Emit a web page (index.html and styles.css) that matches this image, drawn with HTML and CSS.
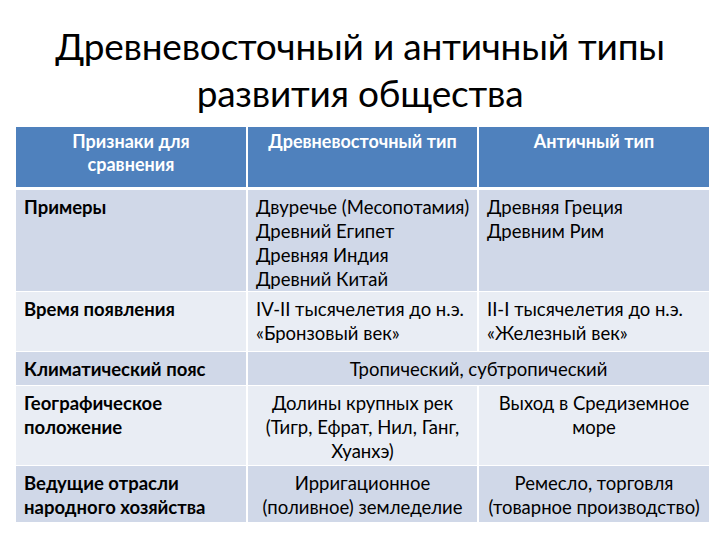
FILE: index.html
```html
<!DOCTYPE html>
<html lang="ru">
<head>
<meta charset="utf-8">
<title>Древневосточный и античный типы развития общества</title>
<link rel="stylesheet" href="styles.css">
</head>
<body>
<div class="slide">
  <h1 class="title">Древневосточный и античный типы<br>развития общества</h1>
  <table class="cmp">
    <colgroup>
      <col class="c1"><col class="c2"><col class="c3">
    </colgroup>
    <thead>
      <tr>
        <th>Признаки для<br>сравнения</th>
        <th>Древневосточный тип</th>
        <th>Античный тип</th>
      </tr>
    </thead>
    <tbody>
      <tr class="dark r1">
        <td class="key">Примеры</td>
        <td>Двуречье (Месопотамия)<br>Древний Египет<br>Древняя Индия<br>Древний Китай</td>
        <td>Древняя Греция<br>Древним Рим</td>
      </tr>
      <tr class="light r2">
        <td class="key">Время появления</td>
        <td>IV-II тысячелетия до н.э.<br>«Бронзовый век»</td>
        <td>II-I тысячелетия до н.э.<br>«Железный век»</td>
      </tr>
      <tr class="dark r3">
        <td class="key">Климатический пояс</td>
        <td class="center" colspan="2">Тропический, субтропический</td>
      </tr>
      <tr class="light r4">
        <td class="key">Географическое<br>положение</td>
        <td class="center">Долины крупных рек<br>(Тигр, Ефрат, Нил, Ганг,<br>Хуанхэ)</td>
        <td class="center">Выход в Средиземное<br>море</td>
      </tr>
      <tr class="dark r5">
        <td class="key">Ведущие отрасли<br>народного хозяйства</td>
        <td class="center">Ирригационное<br>(поливное) земледелие</td>
        <td class="center">Ремесло, торговля<br>(товарное производство)</td>
      </tr>
    </tbody>
  </table>
</div>
</body>
</html>
```
FILE: styles.css
```css
html, body {
  margin: 0;
  padding: 0;
  background: #ffffff;
}
.slide {
  width: 720px;
  height: 540px;
  overflow: hidden;
  font-family: "Lato", "Open Sans", sans-serif;
  color: #000;
}
.title {
  margin: 0;
  padding-top: 22px;
  height: 127px;
  box-sizing: border-box;
  text-align: center;
  font-weight: 400;
  font-size: 37px;
  line-height: 47px;
  letter-spacing: -0.2px;
}
.cmp {
  margin-left: 16px;
  width: 693px;
  border-collapse: collapse;
  table-layout: fixed;
  font-size: 18.5px;
  line-height: 24px;
}
.c1 { width: 231px; }
.c2 { width: 231px; }
.c3 { width: 231px; }
.cmp th {
  background: #4f81bd;
  color: #fff;
  font-weight: 700;
  font-size: 18px;
  line-height: 23px;
  text-align: center;
  vertical-align: top;
  height: 61px;
  box-sizing: border-box;
  padding: 3px 6px 0;
  border-left: 2px solid #fff;
  border-bottom: 3px solid #fff;
}
.cmp th:first-child { border-left: none; }
.cmp td {
  vertical-align: top;
  padding: 5px 4px 0 8px;
  border-left: 2px solid #fff;
  border-top: 1px solid #fff;
  box-sizing: border-box;
  white-space: nowrap;
}
.cmp td:first-child { border-left: none; }
.cmp td.key { font-weight: 700; }
.cmp td.center { text-align: center; padding-left: 4px; }
.dark td { background: #d0d8e8; }
.light td { background: #e9edf4; }
.r1 td { height: 103px; }
.r2 td { height: 60px; }
.r3 td { height: 34px; }
.r4 td { height: 80px; }
.r5 td { height: 57px; }
```
